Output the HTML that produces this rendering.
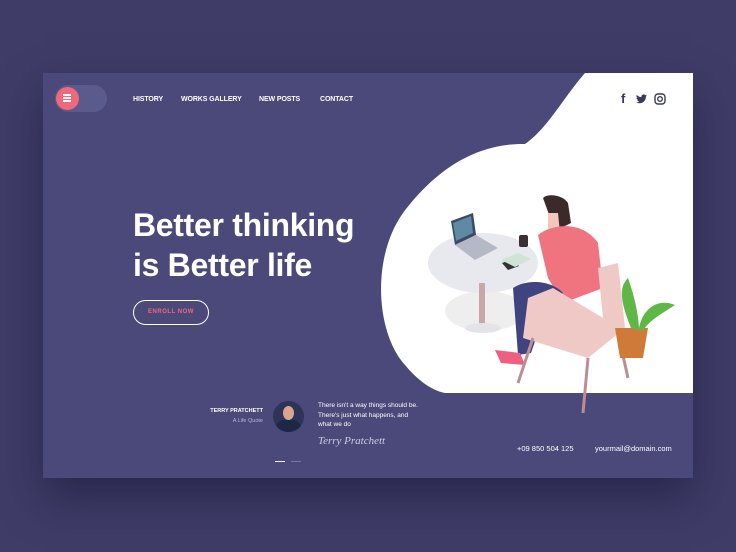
<!DOCTYPE html>
<html><head><meta charset="utf-8"><style>
*{margin:0;padding:0;box-sizing:border-box}
body{width:736px;height:552px;background:#3f3d68;font-family:"Liberation Sans",sans-serif;position:relative;overflow:hidden}
.card{position:absolute;left:43px;top:73px;width:650px;height:405px;background:#4a4979;box-shadow:0 20px 40px rgba(20,18,50,.5);overflow:hidden}
.abs{position:absolute}
.nav a{position:absolute;top:23px;color:#fff;font-size:7px;font-weight:bold;letter-spacing:-0.1px}
h1{position:absolute;left:90px;top:132px;color:#fff;font-size:32px;line-height:40px;font-weight:bold;letter-spacing:-0.3px}
</style></head><body>
<div class="card">
<svg class="abs" style="left:0;top:0" width="650" height="405">
<path d="M542,0 C520,25 505,55 482,71 C430,70 390,100 360,140 C328,185 333,260 362,292 C375,308 390,318 402,320 L650,320 L650,0 Z" fill="#fff"/>
<ellipse cx="442" cy="238" rx="40" ry="20" fill="#eee"/>
<ellipse cx="440" cy="190" rx="55" ry="30" fill="#e8e9ef"/>
<rect x="436" y="210" width="6" height="45" fill="#c9a6a8"/>
<ellipse cx="440" cy="255" rx="18" ry="5" fill="#e4e4e8"/>
<path d="M408,148 L430,140 L433,162 L412,172 Z" fill="#3a4a6a"/>
<path d="M410,150 L428,143 L430,160 L413,168 Z" fill="#5e8aa3"/>
<path d="M412,172 L433,162 L455,175 L432,187 Z" fill="#b5b8c5"/>
<path d="M459,190 L470,186 L476,193 L465,197 Z" fill="#333"/>
<path d="M458,187 L475,180 L488,186 L472,194 Z" fill="#cfe3d7"/>
<path d="M500,125 C505,120 520,122 525,130 L528,150 L512,158 Z" fill="#3c2a2a"/>
<path d="M505,140 L515,140 L517,160 L505,160 Z" fill="#f2c9b8"/>
<path d="M495,162 C510,150 540,148 555,170 L560,215 L520,230 L505,205 Z" fill="#ef7480"/>
<rect x="476" y="162" width="9" height="12" rx="2" fill="#3a3030"/>
<path d="M470,215 C485,205 510,208 520,220 L500,245 L488,280 L475,282 Z" fill="#3f4380"/>
<path d="M452,277 L477,280 L482,292 L458,290 Z" fill="#ee5f80"/>
<path d="M485,225 L510,215 L560,245 L555,195 L575,190 L582,255 L545,285 L480,265 Z" fill="#efc9c5"/>
<path d="M490,265 L475,310 M545,285 L540,340 M575,260 L585,305" stroke="#b98f94" stroke-width="3"/>
<path d="M572,255 L605,255 L600,285 L577,285 Z" fill="#d07a3a"/>
<path d="M588,255 C578,230 575,215 585,205 C592,225 595,240 596,255 C600,235 615,225 632,232 C620,240 605,248 600,258 Z" fill="#5fb846"/>
</svg>
<div class="abs" style="left:12px;top:12px;width:52px;height:27px;border-radius:14px;background:#5a5a8c"></div>
<div class="abs" style="left:13px;top:14px;width:23px;height:23px;border-radius:50%;background:#f0697a"></div>
<div class="abs" style="left:20px;top:21px;width:8px;height:1.5px;background:#fff;box-shadow:0 3px 0 #fff,0 6px 0 #fff"></div>
<div class="nav"><a style="left:90px">HISTORY</a><a style="left:138px">WORKS GALLERY</a><a style="left:216px">NEW POSTS</a><a style="left:277px">CONTACT</a></div>
<div class="abs" style="left:578px;top:18px;font-size:13px;font-weight:bold;color:#3a3960">f</div>
<svg class="abs" style="left:593px;top:21px" width="11" height="10" viewBox="0 0 24 20"><path d="M24 2.4a10 10 0 0 1-2.8.8A5 5 0 0 0 23.3.5a10 10 0 0 1-3.1 1.2A4.9 4.9 0 0 0 11.8 6 14 14 0 0 1 1.7.9a4.9 4.9 0 0 0 1.5 6.6A4.900 4.900 0 0 1 1 6.9a4.900 4.900 0 0 0 3.900 4.800 5 5 0 0 1-2.200.1 4.900 4.900 0 0 0 4.600 3.400A9.900 9.900 0 0 1 0 17.200 14 14 0 0 0 7.500 19.400c9.100 0 14-7.500 14-14v-.6A10 10 0 0 0 24 2.400z" fill="#3a3960"/></svg>
<svg class="abs" style="left:611px;top:20px" width="12" height="12" viewBox="0 0 12 12"><rect x="1" y="1" width="10" height="10" rx="3" fill="none" stroke="#3a3960" stroke-width="1.4"/><circle cx="6" cy="6" r="2.3" fill="none" stroke="#3a3960" stroke-width="1.4"/></svg>
<h1>Better thinking<br>is Better life</h1>
<div class="abs" style="left:90px;top:227px;width:76px;height:25px;border:1.5px solid #fff;border-radius:13px;color:#f0697a;font-size:6px;font-weight:bold;text-align:center;line-height:22px;letter-spacing:.5px">ENROLL NOW</div>
<div class="abs" style="left:150px;top:335px;width:70px;text-align:right;color:#fff;font-size:5.5px;font-weight:bold">TERRY PRATCHETT</div>
<div class="abs" style="left:150px;top:345px;width:70px;text-align:right;color:#b9b8d8;font-size:5.5px">A Life Quote</div>
<div class="abs" style="left:230px;top:328px;width:31px;height:31px;border-radius:50%;background:#2d3458;overflow:hidden"><div style="position:absolute;left:10px;top:5px;width:11px;height:14px;border-radius:50%;background:#d9a58e"></div><div style="position:absolute;left:3px;top:19px;width:25px;height:15px;border-radius:8px 8px 0 0;background:#1d2848"></div></div>
<div class="abs" style="left:275px;top:328px;color:#fff;font-size:6.5px;line-height:9.5px">There isn't a way things should be.<br>There's just what happens, and<br>what we do</div>
<div class="abs" style="left:275px;top:362px;color:#cfcde8;font-size:11px;font-style:italic;font-family:'Liberation Serif',serif">Terry Pratchett</div>
<div class="abs" style="left:232px;top:388px;width:10px;height:1px;background:#fff"></div>
<div class="abs" style="left:248px;top:388px;width:10px;height:1px;background:#77769f"></div>
<div class="abs" style="left:474px;top:371px;color:#fff;font-size:7.5px">+09 850 504 125</div>
<div class="abs" style="left:552px;top:371px;color:#fff;font-size:7.5px">yourmail@domain.com</div>
</div>
</body></html>
